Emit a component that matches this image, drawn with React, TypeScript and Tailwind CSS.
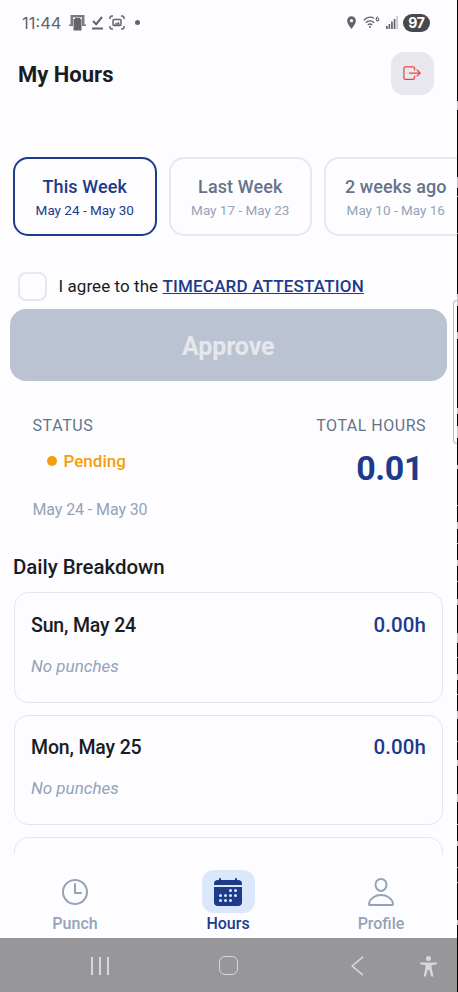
import { useState } from 'react';
import { IoCalendar, IoExitOutline, IoPersonOutline, IoTimeOutline } from 'react-icons/io5';
import { MdLocationOn } from 'react-icons/md';

const weeks = [
    { label: 'This Week', range: 'May 24 - May 30' },
    { label: 'Last Week', range: 'May 17 - May 23' },
    { label: '2 weeks ago', range: 'May 10 - May 16' }
];

const days = [
    { label: 'Sun, May 24', hours: '0.00h' },
    { label: 'Mon, May 25', hours: '0.00h' }
];

const tabs = [
    { label: 'Punch', icon: IoTimeOutline, width: 'w-[150px]' },
    { label: 'Hours', icon: IoCalendar, width: 'w-[156px]' },
    { label: 'Profile', icon: IoPersonOutline, width: 'w-[150px]' }
];

// light marks along the black edge strip: [gap above, height]
const edgeMarks = [
    [101, 9], [67, 11], [8, 1], [36, 1], [60, 12], [26, 7], [69, 6], [12, 12], [27, 4],
    [36, 1], [16, 7], [14, 1], [16, 6], [15, 1], [17, 6], [28, 10], [14, 1], [16, 6],
    [14, 1], [16, 8], [22, 1], [18, 6], [28, 8], [22, 1], [16, 5], [21, 1], [14, 1],
    [37, 5]
];

const StatusBar = () => (
    <div className="flex h-[45px] shrink-0 items-center pl-[22px] pr-[27px] text-[#656469]">
        <span className="w-[47px] shrink-0 pt-px font-['Inter'] text-[16.500px]">11:44</span>
        <svg width="17" height="16" viewBox="0 0 17 16" fill="currentColor">
            <path d="M1.500 0h14v9.500H17V11h-4V2.500H4V11H0V9.500h1.500z" opacity=".85" />
            <path d="M4.500 4h1.500V3h5v1h1.500v11.500h-8z" />
        </svg>
        <svg className="ml-[5px]" width="13" height="14" viewBox="0 0 13 14" fill="none" stroke="currentColor" strokeWidth="2">
            <path d="M2 5l3.200 3.200L11 1M1 12.500h11" />
        </svg>
        <svg className="ml-[5px]" width="16" height="15" viewBox="0 0 16 15" fill="none" stroke="currentColor" strokeWidth="1.500">
            <path d="M1 4V3a2 2 0 0 1 2-2h1M12 1h1a2 2 0 0 1 2 2v1M15 11v1a2 2 0 0 1-2 2h-1M4 14H3a2 2 0 0 1-2-2v-1" />
            <rect x="4" y="4.500" width="8" height="6" rx="1" />
            <path d="M5.500 9.500l1.500-1.500 1 .8L9.500 7l1 2.500z" fill="currentColor" strokeWidth=".5" />
        </svg>
        <span className="ml-[10px] size-[5px] rounded-full bg-[#656469]" />
        <MdLocationOn className="ml-auto size-[15px]" />
        <svg className="ml-[4px]" width="17" height="13" viewBox="0 0 17 13" fill="none" stroke="currentColor" strokeWidth="1.300">
            <path d="M.8 4.200C4 1 8 .6 11 2.200M2.800 6.700c2.400-2.400 6-2.400 8.400 0M4.800 9c1.400-1.300 3-1.300 4.400 0" />
            <circle cx="7" cy="11" r="1" fill="currentColor" stroke="none" />
            <path d="M15.200 1c-1.400 0-2 1-2 2.600a1.300 1.300 0 1 0 1.300-1.300" strokeWidth="1.100" />
        </svg>
        <svg className="ml-[6px]" width="12" height="13" viewBox="0 0 12 13" fill="currentColor">
            <path d="M0 10h1.700v3H0zM2.500 8h1.700v5H2.500zM5.100 5.500h1.700V13H5.100zM7.700 3h1.700v10H7.700z" />
            <path d="M10.300 0H12v13h-1.700z" opacity=".35" />
        </svg>
        <span className="ml-[5px] flex h-[18px] w-[27px] items-center justify-center rounded-full bg-[#48484c] font-['Inter'] text-[14px] font-bold tracking-[-0.3px] text-white">97</span>
    </div>
);

const AndroidNav = () => (
    <div className="flex h-[54px] shrink-0 items-center bg-[#979799] pt-px text-[#d8d8dc]">
        <div className="flex w-[200px] justify-center gap-[6px]">
            <span className="h-[18px] w-[2px] bg-current" />
            <span className="h-[18px] w-[2px] bg-current" />
            <span className="h-[18px] w-[2px] bg-current" />
        </div>
        <div className="flex w-[56px] justify-center">
            <span className="h-[19px] w-[19px] rounded-[6px] border-[1.500px] border-current" />
        </div>
        <svg className="ml-[95px]" width="13" height="20" viewBox="0 0 13 20" fill="none" stroke="currentColor" strokeWidth="1.600">
            <path d="M12 .8L1.200 10 12 19.200" />
        </svg>
        <svg className="ml-[56px] mt-px" width="17" height="21" viewBox="0 0 17 21" fill="currentColor">
            <circle cx="8.500" cy="2.500" r="2.500" />
            <path d="M0 6.500h17v1.800l-5.500.9.300 3.800 1.700 7.500h-2.300L9.300 14H7.700l-1.900 6.500H3.500L5.200 13l.3-3.800L0 8.300z" />
        </svg>
    </div>
);

const App = () => {
    const [week, setWeek] = useState(0);
    const [agreed, setAgreed] = useState(false);
    const [tab, setTab] = useState('Hours');

    return (
        <div className="relative flex h-[992px] w-[458px] overflow-hidden bg-[#fdfdff] font-['Roboto',sans-serif] text-[#1a1c24]">
            <div className="flex w-[457px] shrink-0 flex-col">
                <StatusBar />
                <header className="flex h-[57px] shrink-0 items-center justify-between pl-[18px] pr-[23px]">
                    <h1 className="pt-[2px] text-[22px] font-bold">My Hours</h1>
                    <button type="button" className="flex size-[43px] items-center justify-center rounded-[13px] bg-[#e8e7ed] pr-px pb-[2px]">
                        <IoExitOutline className="size-[20px] text-[#ef4444]" />
                    </button>
                </header>

                <main className="flex h-[752px] shrink-0 flex-col overflow-hidden pt-[55px]">
                    <div className="flex shrink-0 gap-[12px] overflow-hidden pl-[13px]">
                        {weeks.map((w, i) => (
                            <button key={w.label} type="button" onClick={() => setWeek(i)}
                                className={`flex h-[79px] w-[143.500px] shrink-0 flex-col items-center rounded-[15px] border-2 pt-[16px] ${i === week ? 'border-[#1e3a8a] text-[#1e3a8a]' : 'border-[#e8e7ed] text-[#64748b]'}`}>
                                <span className="text-[18px] leading-[24px] font-medium tracking-[0.1px]">{w.label}</span>
                                <span className={`text-[13.500px] leading-[23px] ${i === week ? '' : 'text-[#94a3b8]'}`}>{w.range}</span>
                            </button>
                        ))}
                    </div>

                    <div className="mt-[36px] flex h-[28px] shrink-0 items-center pl-[18px]">
                        <button type="button" onClick={() => setAgreed(!agreed)}
                            className="size-[29px] shrink-0 rounded-[8px] border-2 border-[#e8e7ed]" />
                        <p className="ml-[11.500px] pt-[2px] text-[17px] whitespace-nowrap">
                            <span className="tracking-[0.070px]">I agree to the </span>
                            <a className="font-medium tracking-[0.180px] text-[#1e3a8a] underline">TIMECARD ATTESTATION</a>
                        </p>
                    </div>
                    <button type="button" disabled={!agreed}
                        className="mr-[10px] ml-[9.500px] mt-[9px] h-[72px] shrink-0 rounded-[16px] bg-[#bbc3d3] pt-[3px] text-[25px] font-bold tracking-[-0.1px] text-[#e6e7ed]">
                        Approve
                    </button>

                    <section className="flex h-[172px] shrink-0 justify-between pl-[32.500px] pr-[31px] pt-[33px]">
                        <div>
                            <h2 className="text-[16px] leading-[24px] tracking-[0.6px] text-[#64748b]">STATUS</h2>
                            <div className="mt-[11px] flex items-center pl-[14px] leading-[24px] text-[#f59e0b]">
                                <span className="size-[10px] rounded-full bg-current" />
                                <span className="ml-[7px] text-[17px] font-medium">Pending</span>
                            </div>
                            <p className="mt-[25px] text-[16px] leading-[24px] tracking-[-0.1px] text-[#94a3b8]">May 24 - May 30</p>
                        </div>
                        <div className="text-right">
                            <h2 className="text-[16px] leading-[24px] tracking-[0.5px] text-[#64748b]">TOTAL HOURS</h2>
                            <p className="mt-[10px] pr-[3px] text-[34px] leading-[40px] font-bold tracking-[-0.4px] text-[#1e3a8a]">0.01</p>
                        </div>
                    </section>

                    <h2 className="ml-[13px] h-[39px] shrink-0 text-[20.500px] leading-[28px] font-medium tracking-[-0.050px]">Daily Breakdown</h2>
                    <div className="flex shrink-0 flex-col gap-[12px] pl-[14px] pr-[14px]">
                        {days.map((d) => (
                            <div key={d.label} className="h-[110.500px] rounded-[14px] border border-[#e6e6ea] px-[16px] pt-[18.500px]">
                                <div className="flex justify-between text-[20px] leading-[26px]">
                                    <span className="pt-px text-[19.500px] font-medium tracking-[-0.150px]">{d.label}</span>
                                    <span className="text-[20.500px] font-medium tracking-[0.1px] text-[#1e3a8a]">{d.hours}</span>
                                </div>
                                <p className="mt-[15px] text-[17px] leading-[24px] text-[#94a3b8] italic">No punches</p>
                            </div>
                        ))}
                        <div className="h-[110.500px] rounded-[14px] border border-[#e6e6ea]" />
                    </div>
                </main>

                <nav className="flex h-[84px] shrink-0 pt-[16px]">
                    {tabs.map(({ label, icon: Icon, width }) => (
                        <button key={label} type="button" onClick={() => setTab(label)}
                            className={`flex flex-col items-center ${width} ${tab === label ? 'text-[#1e3a8a]' : 'text-[#94a3b8]'}`}>
                            <span className={`flex h-[43px] w-[53px] items-center justify-center rounded-[12px] pr-px ${tab === label ? 'bg-[#dbe7fa]' : ''}`}>
                                <Icon className="size-[32px]" />
                            </span>
                            <span className="text-[16px] leading-[22px] font-medium">{label}</span>
                        </button>
                    ))}
                </nav>
                <AndroidNav />
            </div>
            <div className="flex w-px shrink-0 flex-col overflow-hidden bg-black">
                {edgeMarks.map(([gap, height], i) => (
                    <span key={i} className="w-px shrink-0 bg-[#c8c8cc]" style={{ marginTop: gap, height }} />
                ))}
            </div>
            {/* edge panel handle */}
            <div className="absolute top-[300px] left-[453px] h-[144px] w-[4px] rounded-l-[4px] border border-r-0 border-[#b9b9bd] bg-[#fdfdff]" />
        </div>
    );
};

export default App;
